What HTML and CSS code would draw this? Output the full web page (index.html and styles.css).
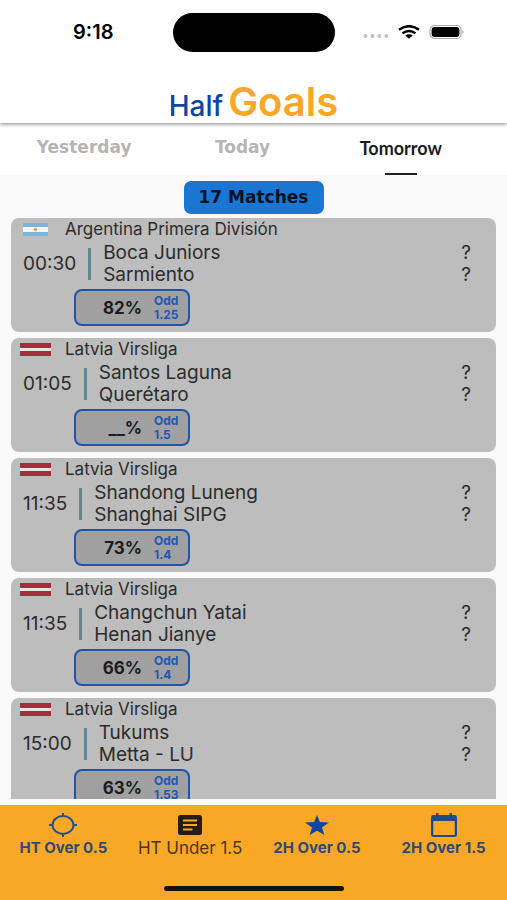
FILE: index.html
```
<!DOCTYPE html>
<html lang="en">
<head>
<meta charset="utf-8">
<meta name="viewport" content="width=device-width, initial-scale=1">
<title>HalfGoals</title>
<link rel="stylesheet" href="styles.css">
</head>
<body>
<svg width="0" height="0" class="defs" aria-hidden="true">
  <symbol id="latvia" viewBox="0 0 31 13"><path fill="#a32f3c" d="M0 0h31v13H0z"/><path fill="#eee4e4" d="M0 5h31v3H0z"/></symbol>
  <symbol id="argentina" viewBox="0 0 31 13"><path fill="#7db4dc" d="M3 0h25v13H3z"/><path fill="#f5f5f5" d="M3 4h25v5H3z"/><circle cx="15.500" cy="6.500" r="1.800" fill="#d9a441"/></symbol>
</svg>
<header class="header">
  <div class="status">
    <span class="clock">9:18</span>
    <span class="island"></span>
    <span class="signals">
      <svg width="26" height="16" viewBox="0 0 26 16"><g fill="#c4c4c4"><circle cx="2.500" cy="12" r="2"/><circle cx="9.500" cy="12" r="2"/><circle cx="16.300" cy="12" r="2"/><circle cx="23.300" cy="12" r="2"/></g></svg>
      <svg width="22" height="14" viewBox="0 0 22 14"><g fill="none" stroke="#000" stroke-width="2.500"><path d="M1 4.800Q11-2.400 21 4.800"/><path d="M4.500 8.300Q11 3.600 17.500 8.300"/></g><path d="M7.300 10.600Q11 8 14.700 10.600L11 13.800z"/></svg>
      <svg width="36" height="16" viewBox="0 0 36 16"><rect x="1" y="1.500" width="31" height="13" rx="4.500" fill="#fff" stroke="#aaa" stroke-width="1.200"/><rect x="2.600" y="3" width="27.800" height="10" rx="3"/><path d="M33.500 6q2 2 0 4z" fill="#888"/></svg>
    </span>
  </div>
  <h1 class="logo"><span class="half">Half</span><span class="goals">Goals</span></h1>
</header>
<nav class="tabs">
  <a href="#yesterday">Yesterday</a>
  <a href="#today">Today</a>
  <a href="#tomorrow" class="active" aria-current="page">Tomorrow</a>
</nav>
<main class="content">
  <div class="count">17 Matches</div>
  <div class="list">
    <article class="card">
      <div class="league"><svg class="flag"><use href="#argentina"/></svg><span>Argentina Primera División</span></div>
      <div class="match"><time>00:30</time><div class="teams"><span>Boca Juniors</span><span>Sarmiento</span></div><div class="score"><span>?</span><span>?</span></div></div>
      <div class="pill"><b class="chance">82%</b><b class="odd">Odd<br>1.25</b></div>
    </article>
    <article class="card">
      <div class="league"><svg class="flag"><use href="#latvia"/></svg><span>Latvia Virsliga</span></div>
      <div class="match"><time>01:05</time><div class="teams"><span>Santos Laguna</span><span>Querétaro</span></div><div class="score"><span>?</span><span>?</span></div></div>
      <div class="pill"><b class="chance">__%</b><b class="odd">Odd<br>1.5</b></div>
    </article>
    <article class="card">
      <div class="league"><svg class="flag"><use href="#latvia"/></svg><span>Latvia Virsliga</span></div>
      <div class="match"><time>11:35</time><div class="teams"><span>Shandong Luneng</span><span>Shanghai SIPG</span></div><div class="score"><span>?</span><span>?</span></div></div>
      <div class="pill"><b class="chance">73%</b><b class="odd">Odd<br>1.4</b></div>
    </article>
    <article class="card">
      <div class="league"><svg class="flag"><use href="#latvia"/></svg><span>Latvia Virsliga</span></div>
      <div class="match"><time>11:35</time><div class="teams"><span>Changchun Yatai</span><span>Henan Jianye</span></div><div class="score"><span>?</span><span>?</span></div></div>
      <div class="pill"><b class="chance">66%</b><b class="odd">Odd<br>1.4</b></div>
    </article>
    <article class="card">
      <div class="league"><svg class="flag"><use href="#latvia"/></svg><span>Latvia Virsliga</span></div>
      <div class="match"><time>15:00</time><div class="teams"><span>Tukums</span><span>Metta - LU</span></div><div class="score"><span>?</span><span>?</span></div></div>
      <div class="pill"><b class="chance">63%</b><b class="odd">Odd<br>1.53</b></div>
    </article>
  </div>
</main>
<footer class="bottom">
  <nav class="menu">
    <a href="#ht-over"><svg width="28" height="24" viewBox="0 0 28 24"><g fill="none" stroke="#24508f" stroke-width="2"><ellipse cx="14" cy="12" rx="10.500" ry="9"/><path d="M14 0v4M14 20v4M0 12h4M24 12h4"/></g></svg><span>HT Over 0.5</span></a>
    <a href="#ht-under" class="current" aria-current="page"><svg width="28" height="24" viewBox="0 0 28 24"><rect x="2" y="2" width="24" height="20" rx="2.500" fill="#241d13"/><path d="M7 7.500h14M7 12h14M7 16.500h9.500" stroke="#f9a825" stroke-width="2"/></svg><span>HT Under 1.5</span></a>
    <a href="#2h-over-05"><svg width="28" height="24" viewBox="0 0 28 24"><path fill="#0d47a1" d="M14 2l2.900 7L26 9.500l-7 5L21.400 22 14 17.800 6.600 22 9 14.500l-7-5L11.100 9z"/></svg><span>2H Over 0.5</span></a>
    <a href="#2h-over-15"><svg width="28" height="24" viewBox="0 0 28 24"><path fill="#1f4a8c" fill-rule="evenodd" d="M6 0h2.500v2h11V0H22v2h2.500Q27 2 27 4v17.500q0 2.500-2.500 2.500h-21Q1 24 1 21.500V4q0-2 2.500-2H6zM3.300 8v14h21.400V8z"/></svg><span>2H Over 1.5</span></a>
  </nav>
  <div class="home"></div>
</footer>
</body>
</html>
```
FILE: styles.css
```
* { box-sizing: border-box; }
body {
  margin: 0;
  height: 100vh;
  display: flex;
  flex-direction: column;
  background: #fafafa;
  color: #2c2c2c;
  font-family: Inter, "Liberation Sans", sans-serif;
}
a { color: inherit; text-decoration: none; }
.defs { position: absolute; }
.header {
  flex: none;
  position: relative;
  padding-bottom: 1px;
  background: #fff;
  box-shadow: 0 1px 4px rgba(0, 0, 0, 0.5);
}
.status {
  display: grid;
  grid-template-columns: 1fr 162px 1fr;
  align-items: center;
  height: 64px;
}
.clock {
  justify-self: center;
  padding-left: 14px;
  color: #000;
  font-size: 20px;
  font-weight: 600;
}
.island { height: 39px; border-radius: 20px; background: #000; }
.signals { display: flex; align-items: center; gap: 9px; padding-left: 28px; }
.logo {
  display: flex;
  justify-content: center;
  align-items: baseline;
  gap: 5px;
  margin: 0;
  padding-top: 18px;
  font-size: 40px;
  line-height: 40px;
  font-weight: 500;
}
.half { color: #0d47a1; font-size: 28px; line-height: 28px; }
.goals { color: #f9a825; font-weight: 600; }
.tabs {
  flex: none;
  display: grid;
  grid-template-columns: repeat(3, 1fr);
  height: 52px;
  padding: 0 27px 0 5px;
  background: #fff;
  color: #b5b5b5;
  font: bold 17px/48px "DejaVu Sans", sans-serif;
  text-align: center;
}
.tabs .active {
  display: flex;
  flex-direction: column;
  align-items: center;
  justify-content: space-between;
  color: #1c1c1c;
  font: 700 18px/50px Lato, sans-serif;
}
.tabs .active::after { content: ""; width: 32px; height: 2px; background: #222; }
.content {
  flex: 1;
  min-height: 0;
  display: flex;
  flex-direction: column;
  padding: 6px 11px;
}
.count {
  flex: none;
  align-self: center;
  min-width: 140px;
  margin-bottom: 4px;
  border-radius: 7px;
  background: #1976d2;
  color: #08131f;
  font: bold 17px/33px "DejaVu Sans", sans-serif;
  text-align: center;
}
.list {
  flex: 1;
  min-height: 0;
  display: flex;
  flex-direction: column;
  gap: 6px;
  overflow: hidden;
}
.card {
  flex: none;
  padding: 0 25px 6px 9px;
  border-radius: 8px;
  background: #bdbdbd;
}
.league {
  display: flex;
  align-items: center;
  gap: 14px;
  margin-bottom: 2px;
  font-size: 17px;
  line-height: 22px;
}
.flag { flex: none; width: 31px; height: 13px; }
.match {
  display: flex;
  align-items: center;
  gap: 12px;
  padding-left: 3px;
  font-size: 19px;
  line-height: 22px;
}
.teams, .score { display: flex; flex-direction: column; }
.teams { flex: 1; }
.match time { display: flex; align-items: center; gap: 12px; }
.match time::after { content: ""; width: 3px; height: 32px; background: #648590; }
.pill {
  display: grid;
  grid-template-columns: 1fr 34px;
  align-items: center;
  gap: 12px;
  width: 116px;
  height: 37px;
  margin: 3px 0 0 54px;
  border: 2px solid #1d54ac;
  border-radius: 8px;
  background: #a0a0a0;
}
.chance { color: #1c1c1c; font-size: 17px; text-align: right; }
.odd { color: #1e58b4; font-size: 12px; line-height: 14px; }
.bottom {
  flex: none;
  padding: 8px 0 9px;
  background: #f9a825;
}
.menu { display: grid; grid-template-columns: repeat(4, 1fr); }
.menu a {
  display: flex;
  flex-direction: column;
  align-items: center;
  gap: 1px;
  color: #2d4a75;
  font-size: 15px;
  font-weight: 700;
  line-height: 20px;
  white-space: nowrap;
}
.menu .current { color: #4a3514; font-size: 17px; font-weight: 400; }
.home {
  width: 180px;
  height: 5px;
  margin: 28px auto 0;
  border-radius: 3px;
  background: #17130b;
}
```
